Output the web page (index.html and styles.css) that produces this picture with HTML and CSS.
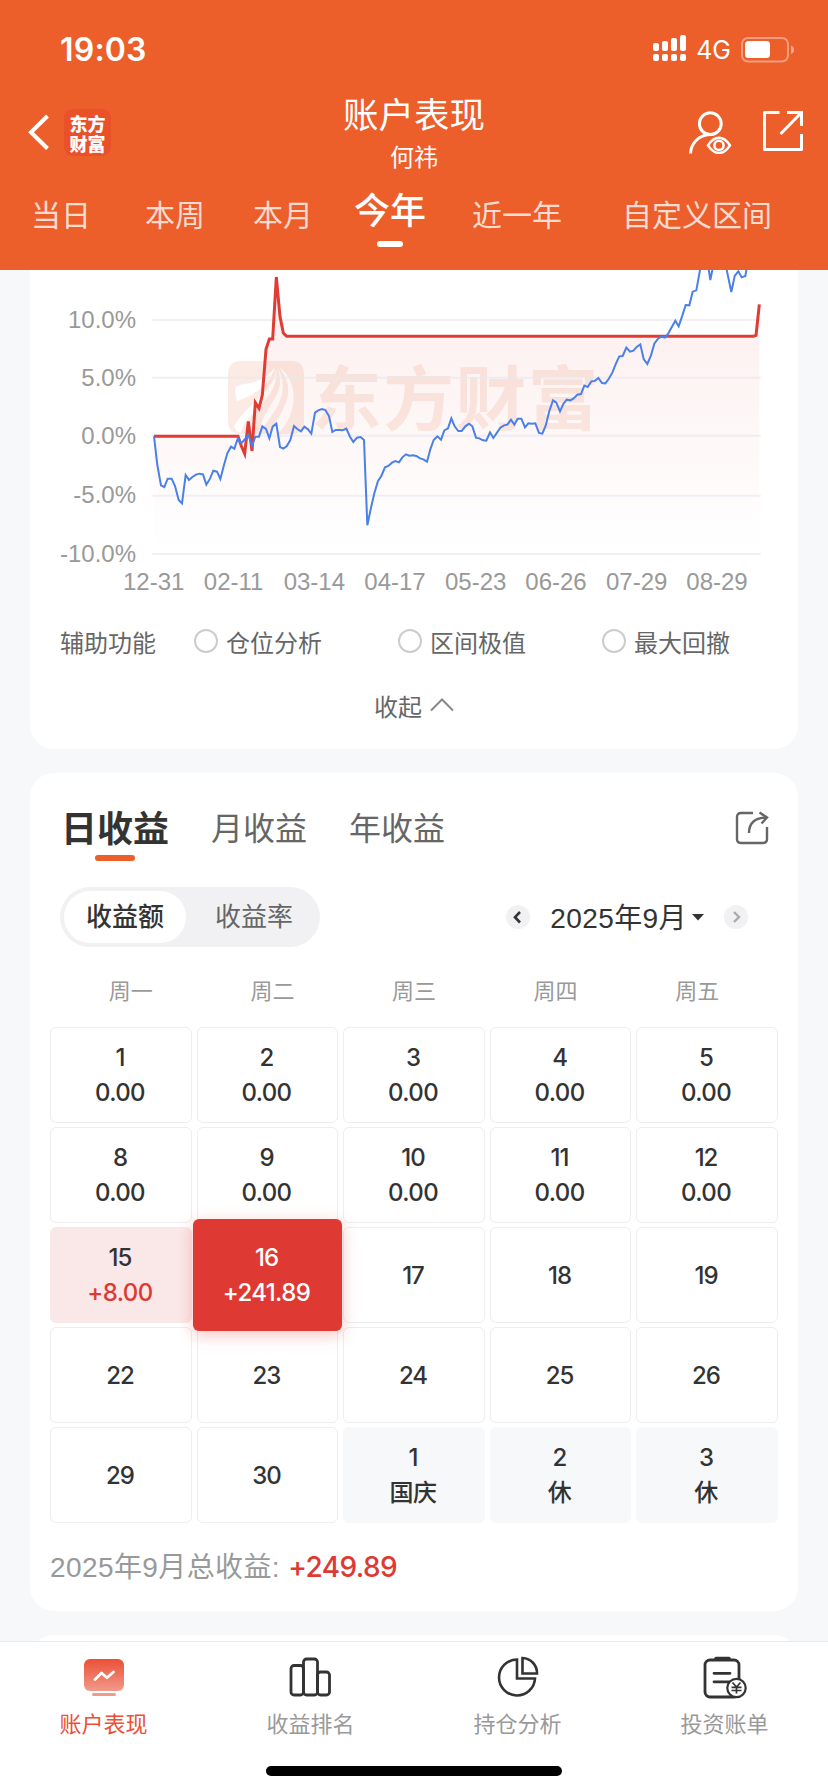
FILE: index.html
```html
<!DOCTYPE html>
<html lang="zh-CN">
<head>
	<title>账户表现</title>
	<meta charset="utf-8" />
	<link rel="stylesheet" href="styles.css">
</head>
<body>
<div class="page">
	<div class="header">
		<div class="status">
			<span class="time">19:03</span>
			<div class="status-right">
				<svg class="signal" width="34" height="26" viewBox="0 0 34 26" fill="#fff">
					<rect x="0" y="8" width="6" height="8" rx="2"/><rect x="9" y="6" width="6" height="10" rx="2"/><rect x="18" y="3" width="6" height="13" rx="2"/><rect x="27" y="0" width="6" height="16" rx="2"/>
					<rect x="0" y="19" width="6" height="7" rx="2"/><rect x="9" y="19" width="6" height="7" rx="2"/><rect x="18" y="19" width="6" height="7" rx="2"/><rect x="27" y="19" width="6" height="7" rx="2"/>
				</svg>
				<span class="net">4G</span>
				<svg class="battery" width="54" height="26" viewBox="0 0 54 26">
					<rect x="1" y="1" width="46" height="23.500" rx="6" fill="none" stroke="#fff" stroke-opacity=".4" stroke-width="2"/>
					<rect x="4" y="4" width="25" height="17" rx="3.500" fill="#fff"/>
					<path d="M50 8.500Q53 9.500 53 12.700T50 17z" fill="#fff" fill-opacity=".45"/>
				</svg>
			</div>
		</div>
		<div class="nav">
			<div class="nav-left">
				<svg width="22" height="36" viewBox="0 0 22 36" fill="none" stroke="#fff" stroke-width="4"><path d="M19.500 2L3 18.300L19.500 34.500"/></svg>
				<div class="logo">东方<br>财富</div>
			</div>
			<div class="title">
				<div class="title-main">账户表现</div>
				<div class="title-sub">何祎</div>
			</div>
			<div class="nav-right">
				<svg width="44" height="44" viewBox="0 0 44 44" fill="none" stroke="#fff" stroke-width="3">
					<circle cx="22.300" cy="13.700" r="10.900"/>
					<path d="M2.500 43.500C3 33 11 25 22 24.600"/>
					<path d="M20 35.400Q25 27.800 31 27.800T42 35.400Q37 43 31 43T20 35.400z" stroke-width="2.600"/>
					<circle cx="31" cy="35.400" r="4.600" stroke-width="2.600"/>
				</svg>
				<svg width="42" height="42" viewBox="0 0 42 42" fill="none" stroke="#fff" stroke-width="3" stroke-linejoin="round">
					<path d="M17.500 2.500H2.500V39.500H39.500V24"/>
					<path d="M25 2.500H39.500V16" stroke-linejoin="miter"/><path d="M39 3L18.500 24"/>
				</svg>
			</div>
		</div>
		<div class="periods">
			<span class="p-day">当日</span>
			<span class="p-week">本周</span>
			<span class="p-month">本月</span>
			<span class="p-year on">今年</span>
			<span class="p-last">近一年</span>
			<span>自定义区间</span>
		</div>
	</div>

	<div class="card card-chart">
		<svg class="chart" width="768" height="340" viewBox="0 30 2304 1020">
			<defs>
				<linearGradient id="area" x1="0" y1="229" x2="0" y2="882" gradientUnits="userSpaceOnUse">
					<stop offset="0" stop-color="#e03c34" stop-opacity=".07"/>
					<stop offset="1" stop-color="#e03c34" stop-opacity="0"/>
				</linearGradient>
			</defs>
			<!-- watermark -->
			<g class="mark">
				<path d="M634 303H782Q822 303 822 343V482Q822 522 782 522H634Q594 522 594 482V343Q594 303 634 303z"/>
				<path d="M617 382Q622 375 645 372C695 366 715 345 735 322C725 365 680 405 621 424Q613 400 617 382z" fill="#fff"/>
				<path d="M738 322C742 390 640 440 612 500Q616 515 632 518C650 450 750 420 738 322z" fill="#fff"/>
				<path d="M742 322C775 410 700 430 690 514C735 455 785 400 742 322z" fill="#fff"/>
				<path d="M748 322C800 390 770 440 714 522H742C800 470 812 370 748 322z" fill="#fff"/>
				<text x="843" y="494" textLength="862">东方财富</text>
			</g>
			<path fill="url(#area)" d="M372 529H624L644 581L655 484L666 573L676 428L687 445L697 405L708 268L718 237L728 237L739 51L750 170L760 219L770 229H2176L2188 133V882H372z"/>
			<g stroke="#e8e8f0" stroke-opacity=".7" stroke-width="6">
				<path d="M367 180H2192M367 353H2192M367 527H2192M367 707H2192M367 882H2192"/>
			</g>
			<g class="axis axis-y">
				<text x="318" y="203">10.0%</text>
				<text x="318" y="378">5.0%</text>
				<text x="318" y="553">0.0%</text>
				<text x="318" y="729">-5.0%</text>
				<text x="318" y="905">-10.0%</text>
			</g>
			<g class="axis axis-x">
				<text x="371" y="990">12-31</text>
				<text x="611" y="990">02-11</text>
				<text x="853" y="990">03-14</text>
				<text x="1095" y="990">04-17</text>
				<text x="1337" y="990">05-23</text>
				<text x="1578" y="990">06-26</text>
				<text x="1820" y="990">07-29</text>
				<text x="2061" y="990">08-29</text>
			</g>
			<polyline class="line-red" points="372,529 624,529 634,558 644,581 655,484 666,573 676,428 687,445 697,405 708,268 718,237 728,237 739,51 750,170 760,219 770,229 2170,229 2178,226 2188,133"/>
			<polyline class="line-blue" points="372,529 382,615 393,676 403,681 413,656 425,656 435,678 446,720 456,730 467,645 477,660 487,651 498,644 508,641 519,643 529,674 540,656 550,632 561,635 571,657 582,615 592,580 603,560 613,566 624,534 634,550 645,537 655,524 666,558 676,530 687,530 697,499 708,507 718,535 728,500 739,491 750,561 760,566 770,559 781,540 792,498 802,507 813,514 823,500 834,508 844,521 855,458 865,451 876,447 886,450 897,468 907,516 917,510 928,510 938,511 949,506 960,530 970,546 981,533 992,531 1002,540 1012,796 1023,743 1033,700 1044,663 1054,648 1065,622 1075,618 1086,608 1096,603 1107,607 1117,592 1128,583 1138,587 1149,586 1159,588 1170,595"/>
			<polyline class="line-blue" transform="translate(1170 0)" points="0,595 10,598 21,605 31,568 41,540 52,529 63,539 73,511 84,505 94,475 104,499 115,513 125,513 136,499 147,491 157,499 168,533 178,535 189,541 199,542 210,517 220,534 231,518 241,503 252,496 262,494 273,479 283,494 293,476 304,476 315,502 325,490 335,491 346,490 357,519 367,521 377,497 388,453 399,421 409,428 420,454 430,432 440,419 451,421 461,415 472,404 483,402 493,377 503,381 514,364 524,363 535,354 546,369 556,370 566,357 577,338 588,310 598,289 608,288 619,263 630,275 640,272 651,260 661,253 671,297 682,312 693,286 703,251 714,236 724,230 735,233 745,220 755,202 766,182 776,199 787,167 797,135 808,136 818,95 829,91 840,30 848,0 862,0 871,60 881,10 912,0 918,20 934,96 944,48 955,34 965,52 976,48 980,25 986,0"/>
		</svg>
		<div class="helpers">
			<span class="helper-label">辅助功能</span>
			<span class="radio"><i></i>仓位分析</span>
			<span class="radio"><i></i>区间极值</span>
			<span class="radio"><i></i>最大回撤</span>
		</div>
		<div class="fold">收起<svg width="24" height="14" viewBox="0 0 24 14" fill="none" stroke="#888" stroke-width="2"><path d="M1 12.500L12 1.500L23 12.500"/></svg></div>
	</div>

	<div class="card card-profit">
		<div class="tabs">
			<span class="tab on">日收益</span>
			<span class="tab">月收益</span>
			<span class="tab">年收益</span>
			<svg class="share" width="34" height="34" viewBox="0 0 34 34" fill="none" stroke="#666" stroke-width="2.400">
				<path d="M18 2H6Q2 2 2 6V28Q2 32 6 32H28Q32 32 32 28V16"/>
				<path d="M14 22C14 12 20 6.500 32 6.500M24.500 1.500L32 6.500L26.500 12.500"/>
			</svg>
		</div>
		<div class="bar">
			<div class="segment">
				<span class="on">收益额</span>
				<span>收益率</span>
			</div>
			<div class="month">
				<span class="arrow"><svg width="24" height="24" viewBox="0 0 24 24" fill="none" stroke="#333" stroke-width="2.600"><path d="M14 7L9 12.200L14 17.500"/></svg></span>
				<span class="month-text">2025年9月</span>
				<svg class="caret" width="12" height="7" viewBox="0 0 12 7"><path d="M0 0H12L6 6.500z" fill="#333"/></svg>
				<span class="arrow"><svg width="24" height="24" viewBox="0 0 24 24" fill="none" stroke="#aaa" stroke-width="2.400"><path d="M10 7L15 12L10 17"/></svg></span>
			</div>
		</div>
		<div class="week"><span>周一</span><span>周二</span><span>周三</span><span>周四</span><span>周五</span></div>
		<div class="days">
			<div class="day">1<em>0.00</em></div>
			<div class="day">2<em>0.00</em></div>
			<div class="day">3<em>0.00</em></div>
			<div class="day">4<em>0.00</em></div>
			<div class="day">5<em>0.00</em></div>
			<div class="day">8<em>0.00</em></div>
			<div class="day">9<em>0.00</em></div>
			<div class="day">10<em>0.00</em></div>
			<div class="day">11<em>0.00</em></div>
			<div class="day">12<em>0.00</em></div>
			<div class="day up">15<em>+8.00</em></div>
			<div class="day current">16<em>+241.89</em></div>
			<div class="day">17</div>
			<div class="day">18</div>
			<div class="day">19</div>
			<div class="day">22</div>
			<div class="day">23</div>
			<div class="day">24</div>
			<div class="day">25</div>
			<div class="day">26</div>
			<div class="day">29</div>
			<div class="day">30</div>
			<div class="day rest">1<em>国庆</em></div>
			<div class="day rest">2<em>休</em></div>
			<div class="day rest">3<em>休</em></div>
		</div>
		<div class="total">2025年9月总收益: <b>+249.89</b></div>
	</div>

	<div class="card card-next"></div>

	<div class="tabbar">
		<div class="tabbar-items">
			<div class="item on">
				<svg width="44" height="44" viewBox="0 0 44 44">
					<defs><linearGradient id="tv" x1="0" y1="0" x2="0" y2="1"><stop offset="0" stop-color="#ec4f35"/><stop offset="1" stop-color="#f09a8b"/></linearGradient></defs>
					<rect x="2" y="3" width="40" height="32" rx="6" fill="url(#tv)"/>
					<path d="M13 23.500L19.500 17L25 21.800L31.500 16" fill="none" stroke="#fff" stroke-width="2.800" stroke-linecap="round" stroke-linejoin="round"/>
					<rect x="10" y="37" width="24" height="3" rx="1.500" fill="#f09a8b"/>
				</svg>
				<span>账户表现</span>
			</div>
			<div class="item">
				<svg width="44" height="44" viewBox="0 0 44 44" fill="none" stroke="#333" stroke-width="2.800">
					<rect x="2" y="9.500" width="12.500" height="29.500" rx="3"/><rect x="14.500" y="3" width="14" height="36" rx="3"/><rect x="28.500" y="16" width="12" height="23" rx="3"/>
				</svg>
				<span>收益排名</span>
			</div>
			<div class="item">
				<svg width="44" height="44" viewBox="0 0 44 44" fill="none" stroke="#333" stroke-width="2.600">
					<path d="M21 3.500A18 18 0 1 0 39 22.500H21z"/><path d="M26.500 2V17.500H41A15 15 0 0 0 26.500 2z"/>
				</svg>
				<span>持仓分析</span>
			</div>
			<div class="item">
				<svg width="46" height="44" viewBox="0 0 46 44" fill="none" stroke="#333" stroke-width="2.800">
					<rect x="3" y="4" width="34" height="37" rx="5"/>
					<path d="M14 2.500H27" stroke-width="3.500" stroke-linecap="round"/>
					<path d="M12 17.300H28M12 25.800H27" stroke-linecap="round"/>
					<circle cx="34.500" cy="32" r="9.200" fill="#fff" stroke-width="2.200"/>
					<path d="M30.500 26.500L34.500 31L38.500 26.500M34.500 31V37.500M29.500 31.300H39.500M29.500 34.500H39.500" stroke-width="1.700"/>
				</svg>
				<span>投资账单</span>
			</div>
		</div>
		<div class="home"></div>
	</div>
</div>
</body>
</html>
```
FILE: styles.css
```css
*{padding:0;margin:0;box-sizing:border-box;}
body{font-family:"Liberation Sans","Noto Sans CJK SC",sans-serif;color:#333;background:#f7f8fa;}
svg{display:block;flex:none;}
em,b,i{font-style:normal;}

.page{width:828px;height:1792px;overflow:hidden;position:relative;background:#f7f8fa;}

/* header */
.header{height:270px;background:#ec5e2a;color:#fff;}
.status{height:88px;padding:12px 33px 0 60px;display:flex;justify-content:space-between;align-items:center;font-family:Inter,sans-serif;}
.time{font-size:32px;font-weight:600;line-height:76px;letter-spacing:.2px;}
.status-right{display:flex;align-items:center;}
.signal{margin-bottom:5px;}
.net{font-size:25px;font-weight:400;margin:0 10px 0 9px;}
.nav{height:92px;display:flex;justify-content:space-between;padding:0 24px;}
.nav-left{width:160px;padding:0 0 4px 4px;display:flex;align-items:center;gap:14px;}
.logo{width:47px;height:47px;border-radius:9px;background:#eb5128;font:900 18px/20px "Noto Sans CJK SC",sans-serif;text-align:center;padding-top:4px;}
.title{padding-top:2px;text-align:center;}
.title-main{font-size:35.500px;line-height:52px;}
.title-sub{font-size:24px;line-height:31px;}
.nav-right{width:160px;display:flex;justify-content:flex-end;align-items:flex-start;gap:30px;padding-top:22px;}
.periods{height:90px;padding:6px 0 0 31px;display:flex;font-size:30px;line-height:60px;white-space:nowrap;color:rgba(255,255,255,.78);}
.p-day{margin-right:54px;}
.p-week{margin-right:48px;}
.p-month{margin-right:41px;}
.p-year{margin-right:46px;}
.p-last{margin-right:60px;}
.periods .on{height:61px;font-size:36px;font-weight:500;line-height:52px;color:#fff;display:flex;flex-direction:column;align-items:center;}
.periods .on:after{content:"";width:26px;height:6px;margin-top:3px;border-radius:3px;background:#fff;}

.card{width:768px;margin:0 auto 24px;background:#fff;border-radius:24px;}

/* chart */
.card-chart{height:479px;border-radius:0 0 24px 24px;}
.mark{fill:#fbebe4;}
.mark text{font:bold 212px "Noto Sans CJK SC",sans-serif;}
.axis{font:72px "Liberation Sans",sans-serif;fill:#999;}
.axis-y{text-anchor:end;}
.axis-x{text-anchor:middle;}
.line-red{fill:none;stroke:#e03c34;stroke-width:9;}
.line-blue{fill:none;stroke:#4a80e8;stroke-width:6;}
.helpers{height:62px;padding-left:30px;display:flex;align-items:center;font-size:24px;color:#666;}
.helper-label{width:134px;flex:none;}
.radio{width:204px;flex:none;display:flex;align-items:center;}
.radio i{width:24px;height:24px;margin-right:8px;border:2px solid #ccc;border-radius:50%;}
.fold{height:66px;display:flex;justify-content:center;align-items:center;gap:8px;font-size:24px;color:#666;}

/* profit calendar */
.card-profit{height:838px;padding:0 20px;}
.tabs{height:108px;padding:0 9px 2px 11px;display:flex;align-items:center;gap:42px;font-size:32px;color:#666;}
.tab.on{font-size:36px;font-weight:bold;color:#333;position:relative;}
.tab.on:after{content:"";position:absolute;left:34px;bottom:-9px;width:40px;height:6px;border-radius:3px;background:#ec5e2a;}
.share{margin:3px 0 0 auto;}
.bar{padding:6px 30px 0 10px;display:flex;justify-content:space-between;align-items:center;}
.segment{width:260px;height:60px;padding:4px;display:flex;border-radius:30px;background:#f1f1f3;font-size:26px;line-height:52px;color:#666;}
.segment span{width:122px;flex:none;text-align:center;}
.segment span+span{width:136px;}
.segment .on{border-radius:26px;background:#fff;color:#333;font-weight:500;}
.month{display:flex;align-items:center;font-size:28px;letter-spacing:.4px;}
.arrow{border-radius:50%;background:#f1f1f3;}
.month-text{margin:-3px 0 0 20px;}
.caret{margin:0 20px 0 5px;}
.week{height:80px;padding:0 10px;display:flex;font-size:22px;line-height:89px;color:#999;}
.week span{flex:1;text-align:center;}
.days{display:grid;grid-template-columns:repeat(5,1fr);grid-auto-rows:96px;gap:4px 4.600px;}
.day{padding-right:2px;display:flex;flex-direction:column;justify-content:center;text-align:center;border:1px solid #eee;border-radius:6px;font:500 24px/35px Inter,"Noto Sans CJK SC",sans-serif;letter-spacing:-1px;}
.day em{letter-spacing:-.6px;}
.up{border-color:#fae8e8;background:#fae8e8;}
.up em{color:#de3a33;}
.current{margin:-8px -4px;border:0;background:#de3a33;color:#fff;z-index:1;box-shadow:0 4px 16px rgba(222,58,51,.3);}
.rest{border-color:#f7f8fa;background:#f7f8fa;}
.total{padding-top:24px;font-size:28px;line-height:40px;letter-spacing:.4px;color:#999;}
.total b{font-family:Inter,sans-serif;font-weight:500;letter-spacing:-.6px;color:#de3a33;}
.card-next{height:60px;}

/* bottom bar */
.tabbar{position:absolute;left:0;right:0;bottom:0;height:151px;background:#fff;border-top:1px solid #eaeaec;}
.tabbar-items{height:124px;padding-top:14px;display:flex;}
.item{flex:1;display:flex;flex-direction:column;align-items:center;font-size:22px;line-height:32px;color:#999;}
.item span{margin-top:9px;}
.item.on{color:#ec4f35;}
.home{width:296px;height:10px;margin:0 auto;border-radius:5px;background:#000;}
```
